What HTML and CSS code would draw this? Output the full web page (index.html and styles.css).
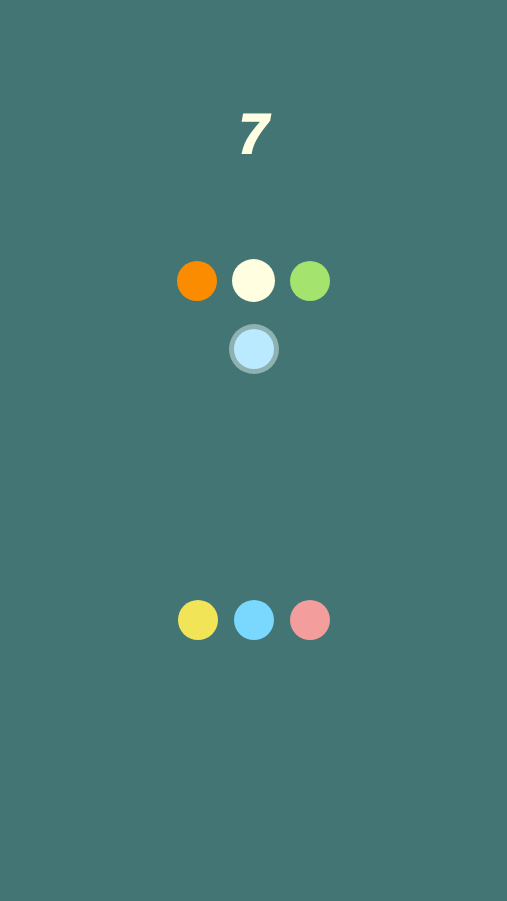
FILE: index.html
```html
<!DOCTYPE html>
<html lang="en">
<head>
  <meta charset="UTF-8">
  <title>Color Match</title>
  <link rel="stylesheet" href="styles.css">
</head>
<body>
  <main class="game">
    <div class="score">7</div>

    <!-- the three dots the player has to match -->
    <div class="row target-row">
      <span class="dot orange"></span>
      <span class="dot cream big"></span>
      <span class="dot green"></span>
    </div>

    <div class="current">
      <span class="ring"><span class="dot sky"></span></span>
    </div>

    <!-- answer buttons -->
    <div class="row choices">
      <span class="dot yellow"></span>
      <span class="dot blue"></span>
      <span class="dot pink"></span>
    </div>
  </main>
</body>
</html>
```

FILE: styles.css
```css
body {
  margin: 0;
  padding: 0;
  background: #437574;
  font-family: 'Liberation Sans', Arial, sans-serif;
}

.game {
  height: 901px;
  display: flex;
  flex-direction: column;
  align-items: center;
}

.score {
  margin-top: 104px;
  height: 60px;
  line-height: 60px;
  font-size: 56px;
  font-weight: bold;
  color: #fffde2;
  transform: skewX(-10deg);
  -webkit-text-stroke: 2px #fffde2;
}

.row {
  display: flex;
  align-items: center;
  gap: 15px;
}

.target-row {
  margin-top: 95px;
}

.dot {
  display: block;
  width: 40px;
  height: 40px;
  border-radius: 50%;
}

.dot.big {
  width: 43px;
  height: 43px;
}

.current {
  margin-top: 22px;
}

.ring {
  display: block;
  padding: 5px;
  border-radius: 50%;
  background: #8fb1b1;
}

.choices {
  margin-top: 226px;
  gap: 16px;
}

.orange { background: #fb8c00; }
.cream  { background: #fffee1; }
.green  { background: #a4e36e; }
.sky    { background: #b9eaff; }
.yellow { background: #f2e457; }
.blue   { background: #7ad8ff; }
.pink   { background: #f39d9d; }
```
